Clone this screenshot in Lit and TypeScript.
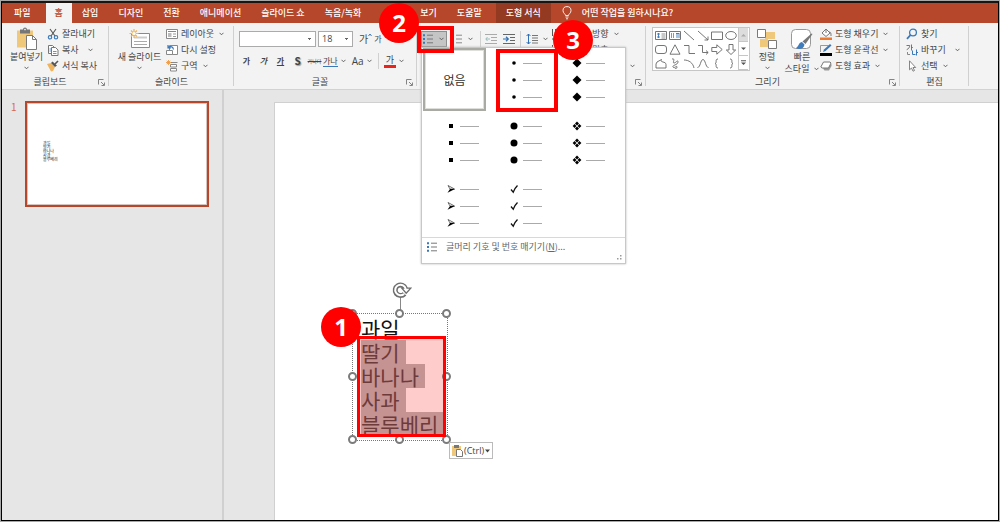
import { LitElement, html, css, svg, nothing } from "lit";
import type { TemplateResult } from "lit";
import { customElement } from "lit/decorators.js";
import { classMap } from "lit/directives/class-map.js";

const icon = (w: number, h: number, body: unknown) =>
  html`<svg class="icon" width=${w} height=${h} viewBox="0 0 ${w} ${h}" fill="none" aria-hidden="true">${body}</svg>`;

const chevron = html`<svg class="chev" width="5" height="4" viewBox="0 0 5 4" fill="none" aria-hidden="true"><path d="M.5 .8 2.5 2.8 4.5 .8" stroke="#555" stroke-width=".9" /></svg>`;

const pasteIcon = icon(22, 24, svg`
  <path d="M1 3.500h16v17H1z" fill="#efc87c"/>
  <path d="M4 2.500h3a2 2 0 0 1 4 0h3v4H4z" fill="#777"/>
  <circle cx="9" cy="2.600" r=".8" fill="#fff"/>
  <path d="M10.500 8.500h6l4 4v10h-10z" fill="#fff" stroke="#7a7a7a"/>
  <path d="M16.500 8.500v4h4" stroke="#7a7a7a"/>`);

const cutIcon = icon(12, 12, svg`
  <path d="M3 1l5 7M9 1L4 8" stroke="#555" stroke-width="1.100"/>
  <circle cx="3" cy="9.300" r="1.700" stroke="#3a78b8" stroke-width="1.100"/>
  <circle cx="9" cy="9.300" r="1.700" stroke="#3a78b8" stroke-width="1.100"/>`);

const copyIcon = icon(12, 12, svg`
  <path d="M1.500 1.500h4l2 2v6h-6z" fill="#fff" stroke="#777"/>
  <path d="M4.500 3.500h4l2.500 2.500v5.500H4.500z" fill="#fff" stroke="#777"/>
  <path d="M6 7.500h3.500M6 9.500h3.500M2.500 5h1.500M2.500 7h1.500" stroke="#3a78b8" stroke-width=".8"/>`);

const brushIcon = icon(12, 12, svg`
  <path d="M0 4l4-1 4 4-2 4-2 .5z" fill="#efb45c"/>
  <path d="M4 3l1.500-1.500 4.500 4L8 7z" fill="#555"/>
  <path d="M8 4l3-3" stroke="#555" stroke-width="1.600"/>`);

const newSlideIcon = icon(22, 20, svg`
  <path d="M2.500 4.500h18v14h-18z" fill="#fff" stroke="#8a8a8a"/>
  <path d="M5 8.500h13" stroke="#ccc" stroke-width="2"/>
  <path d="M5 12.500h13M5 15.500h13" stroke="#aaa"/>
  <path d="M5 0v9M.5 4.500h9M2 1.500l6 6M8 1.500l-6 6" stroke="#efb45c" stroke-width="1.200"/>
  <circle cx="5" cy="4.500" r="1.600" fill="#fff"/>`);

const layoutIcon = icon(12, 12, svg`
  <path d="M.5 1.500h11v9H.5z" fill="#fff" stroke="#888"/>
  <path d="M2 3.500h8" stroke="#888"/>
  <path d="M2 5h3.500v4H2z" fill="#bbb"/>
  <path d="M7 6h3M7 8.500h3" stroke="#999"/>`);

const resetIcon = icon(12, 12, svg`
  <path d="M3.500 1.500h8v9h-8z" fill="#fff" stroke="#888"/>
  <path d="M.5 6.500h6v4h-6z" fill="#fff" stroke="#888"/>
  <path d="M2 3.500c1.500-1.500 5-1.500 5.500 2M2 1v3h3" stroke="#3a78b8" stroke-width="1.200"/>`);

const sectionIcon = icon(12, 12, svg`
  <path d="M5 2.500h6.500" stroke="#888"/>
  <path d="M4.500 4.500h6v2.500h-6zM4.500 8.500h6V11h-6z" fill="#fff" stroke="#888"/>
  <path d="M2.500 0v5M0 2.500h5M.8 .8l3.400 3.400M4.200 .8L.8 4.200" stroke="#ee9b45" stroke-width=".9"/>`);

const listIcon = icon(12, 12, svg`
  <path d="M1 1.200h2v2H1zM1 5h2v2H1zM1 8.800h2v2H1z" fill="#3a78b8"/>
  <path d="M5 2.200h6M5 6h6M5 9.800h6" stroke="#777"/>`);

const numberIcon = icon(12, 12, svg`
  <path d="M2 1v2.500M2 4.700v2.500M2 8.500v2.500" stroke="#3a78b8"/>
  <path d="M5 2.200h6M5 6h6M5 9.800h6" stroke="#888"/>`);

const outdentIcon = icon(12, 12, svg`
  <path d="M0 1.500h12M6 4.500h6M6 7.500h6M0 10.500h12" stroke="#aaa"/>
  <path d="M5 6H1M2.500 4 .8 6l1.700 2" stroke="#9bb"/>`);

const indentIcon = icon(12, 12, svg`
  <path d="M0 1.500h12M7 4.500h5M7 7.500h5M0 10.500h12" stroke="#666"/>
  <path d="M0 6h5M3 3.800 5.300 6 3 8.200" stroke="#2f6fb5" stroke-width="1.200"/>`);

const spacingIcon = icon(12, 12, svg`
  <path d="M2.500 1v10M.6 3 2.500 1l1.900 2M.6 9l1.900 2 1.900-2" stroke="#2f6fb5"/>
  <path d="M6 2.500h6M6 5h6M6 7.500h6M6 10h6" stroke="#777"/>`);

const directionIcon = icon(12, 12, svg`
  <path d="M1.500 1v7M4.500 1v7M1 11h3" stroke="#555"/>
  <path d="M8 1v9M6.500 8.500 8 10.500l1.500-2" stroke="#2f6fb5"/>`);

const arrangeIcon = icon(22, 22, svg`
  <path d="M9 4h10v7H9zM4 11h8v8H4z" fill="#efc87c"/>
  <path d="M1.500 1.500h8v8h-8zM12.500 12.500h8v8h-8z" fill="#fff" stroke="#7a7a7a"/>`);

const styleIcon = icon(24, 24, svg`
  <rect x="1.500" y="2.500" width="19" height="19" rx="4" fill="#fff" stroke="#999"/>
  <path d="M22.500 7l-7 10-3-2.500L21.500 6.500z" fill="#777"/>
  <path d="M12 15c-3 0-3 4-6 6 3 2 8 1 8.500-3.500z" fill="#3f7dbf"/>`);

const fillIcon = icon(12, 12, svg`
  <path d="M2 5l4-4 4 4-4 3.500z" fill="#fff" stroke="#777"/>
  <path d="M6 1v4M9 4c2 0 2 1 2 4" stroke="#777"/>
  <path d="M0 9.500h12V12H0z" fill="#ee7a30"/>`);

const outlineIcon = icon(12, 12, svg`
  <path d="M.5 8V1.500h8" stroke="#999"/>
  <path d="M3 8l1-2.500L10 0l1.500 1.500-6 5.500z" fill="#3a78b8"/>
  <path d="M0 9h12v3H0z" fill="#000"/>`);

const effectIcon = icon(12, 12, svg`
  <path d="M3 8.500l1.500 2H9L11.500 6V4z" fill="#999"/>
  <path d="M3.500 2h6.500l1 1-2.500 5H2L.8 7z" fill="#fff" stroke="#777"/>`);

const findIcon = icon(12, 12, svg`
  <circle cx="7" cy="4.500" r="3.400" stroke="#3a78b8" stroke-width="1.300"/>
  <path d="M4.500 7 1 10.800" stroke="#3a78b8" stroke-width="1.800"/>`);

const replaceIcon = icon(12, 12, svg`
  <path d="M.5 1.500h3.200c0 1.800-1 3.300-3 4.200M5.500 .5v6M5.500 3.500h1.300" stroke="#666" stroke-width=".9"/>
  <path d="M6.500 6.500v4h3M10.500 5.500v6M10.500 8.500H12" stroke="#3a78b8"/>
  <path d="M1.500 8v2.500H4" stroke="#888"/>`);

const selectIcon = icon(12, 12, svg`
  <path d="M3.500 .8v9l2-1.800 1.500 3.200 1.500-.7L7 7.500h2.700z" fill="#fff" stroke="#777" stroke-width=".9"/>`);

const launcherIcon = icon(7, 7, svg`
  <path d="M.5 5.500v-5h5M3 3l3 3M6.500 3.500v3h-3" stroke="#777" stroke-width=".9"/>`);

const bulbIcon = icon(10, 14, svg`
  <path d="M3.500 9.500C3.500 8 1 7.200 1 4.600a4 4 0 0 1 8 0C9 7.200 6.500 8 6.500 9.500zM3.500 11h3M4 12.800h2" stroke="#fff" stroke-width=".9"/>`);

const shapeBodies = [
  svg`<path d="M.5 1.500h11v8H.5z"/><path d="M2 4h3M2 7h3M3.500 3v5" stroke="#3a78b8"/><path d="M6.500 4h4M6.500 6h4M6.500 8h4" stroke-width=".7"/>`,
  svg`<path d="M.5 1.500h11v8H.5z"/><path d="M7 3.500h3M8 3v5M10 3v5" stroke="#3a78b8"/><path d="M2.500 3v5M4.500 3v5" stroke-width=".7"/>`,
  svg`<path d="M1 1l10 9"/>`,
  svg`<path d="M1 1l10 9M11 6.500V10H7.500"/>`,
  svg`<path d="M.5 2h11v7.500H.5z"/>`,
  svg`<ellipse cx="6" cy="5.500" rx="5.300" ry="4"/>`,
  svg`<rect x=".5" y="1.500" width="11" height="8" rx="2.500"/>`,
  svg`<path d="M6 .8l5 9.400H1z"/>`,
  svg`<path d="M1 1.500h5v8h6"/>`,
  svg`<path d="M1 1.500h4.500v7H11M9 6.500l2.200 2L9 10.500"/>`,
  svg`<path d="M.8 3.500h5V.8L11.200 5.500l-5.400 4.700V7.500h-5z"/>`,
  svg`<path d="M4 .5h4V6h2.700L6 10.500 1.300 6H4z"/>`,
  svg`<path d="M2 4l4.500-2.500c-2 3.500 4.500 1.500 4.500 5v3.500H1V6z"/>`,
  svg`<path d="M3 1c4-1 0 4 2 4s4-4 4-1-6 3-5 5 4-2 4 0-2 2-2 1"/>`,
  svg`<path d="M1 2c5 0 9 3 10 8"/>`,
  svg`<path d="M.5 9.500c3 0 3-8 5.500-8s2.500 8 5.500 8"/>`,
  svg`<path d="M7 1C3.500 1 6.500 5 4 5.500 6.500 6 3.500 10 7 10"/>`,
  svg`<path d="M5 1c3.500 0 .5 4 3 4.500C5.500 6 8.500 10 5 10"/>`,
];

type Mark = (y: number) => unknown;
const marks: { name: string; mark: Mark }[] = [
  { name: "작은 원", mark: (y) => svg`<circle cx="28" cy=${y} r="1.800"/>` },
  { name: "마름모", mark: (y) => svg`<path transform="translate(28 ${y})" d="M0-4.500 4.500 0 0 4.500-4.500 0z"/>` },
  { name: "사각형", mark: (y) => svg`<rect x="26" y=${y - 2} width="4" height="4"/>` },
  { name: "큰 원", mark: (y) => svg`<circle cx="28" cy=${y} r="3.500"/>` },
  {
    name: "별표 마름모",
    mark: (y) => svg`<g transform="translate(28 ${y})"><path d="M0-4.400 2-2.400 0-.6-2-2.400zM0 .6 2 2.400 0 4.400-2 2.400zM-4.400 0-2.400-2-.6 0-2.400 2zM.6 0 2.400-2 4.400 0 2.400 2z"/></g>`,
  },
  {
    name: "화살표",
    mark: (y) => svg`<g transform="translate(28 ${y})"><path d="M-3-3.500 3.500 0-1 0z" fill="#fff" stroke="#333" stroke-width=".7"/><path d="M-3.500 3.800-1 0h5z"/></g>`,
  },
  {
    name: "확인 표시",
    mark: (y) => svg`<path transform="translate(28 ${y})" d="M-3 .5-.8 3.200C0 .5 2-2 3.500-3.500" fill="none" stroke="#111" stroke-width="1.300"/>`,
  },
];

const handles = ["nw", "n", "ne", "w", "e", "sw", "s", "se"];

@customElement("app-root")
export class AppRoot extends LitElement {
  static styles = css`
    :host {
      display: block;
      height: 100vh;
      box-sizing: border-box;
      padding: 1px;
      background: #a8a8a8;
      font-family: "Noto Sans CJK KR", "Noto Sans", sans-serif;
      font-size: 9px;
      line-height: 12px;
      color: #444;
    }
    * { box-sizing: border-box; }
    button, select, input {
      font: inherit;
      color: inherit;
      background: none;
      border: 0;
      padding: 0;
      margin: 0;
      border-radius: 0;
      white-space: nowrap;
    }
    svg { display: block; flex: none; }
    .frame {
      height: 100%;
      display: flex;
      flex-direction: column;
      border: 1px solid #000;
      border-top: 2px solid #1c1410;
      overflow: hidden;
      background: #e6e6e6;
    }
    .tabs {
      display: flex;
      height: 20px;
      flex: none;
      background: #b7472a;
      color: #fff;
      font-weight: 500;
    }
    .tab { padding: 0 10px; }
    .tab.file { padding: 0 15px 0 12px; }
    .tab.active { background: #f3f3f3; color: #b7472a; padding: 0 9px; }
    .tab.covered { width: 39px; }
    .tab.context { background: #943a22; margin-left: 4px; }
    .tell { display: flex; align-items: center; gap: 10px; padding: 0 11px; }

    .ribbon {
      display: flex;
      flex: none;
      height: 67px;
      background: #f3f3f3;
      border-bottom: 1px solid #d2d2d2;
      position: relative;
      z-index: 2;
    }
    .group {
      position: relative;
      flex: none;
      display: flex;
      flex-direction: column;
      padding-top: 2px;
    }
    .group::after {
      content: "";
      position: absolute;
      right: 0;
      top: 3px;
      bottom: 3px;
      width: 1px;
      background: #d0d0d0;
    }
    .clipboard { width: 107px; }
    .slides { width: 125px; }
    .font { width: 183px; }
    .paragraph { width: 229px; }
    .drawing { width: 254px; }
    .editing { width: 69px; }
    .body { display: flex; flex: 1; min-height: 0; padding-left: 4px; }
    .foot { display: flex; flex: none; align-items: center; height: 14px; }
    .caption { flex: 1; text-align: center; }
    .launch { width: 11px; }
    .big {
      display: flex;
      flex-direction: column;
      align-items: center;
      padding-top: 2px;
    }
    .art { height: 24px; display: flex; align-items: center; }
    .big .chev { margin-top: 3px; }
    .clipboard .big { width: 41px; }
    .slides .big { width: 53px; }
    .two { display: flex; align-items: center; gap: 5px; }
    .two .chev { margin: 0; }
    .col { display: flex; flex-direction: column; padding-top: 1px; }
    .cmd { display: flex; align-items: center; height: 16px; gap: 3px; }
    .cmd .chev { margin-left: 2px; }

    .font .body { flex-direction: column; }
    .row { display: flex; align-items: center; }
    .boxes { height: 28px; gap: 2px; padding-left: 1px; }
    .combo {
      height: 16px;
      background: #fff;
      border: 1px solid #ababab;
      appearance: none;
      padding: 0 3px;
      background-image: linear-gradient(#666, #666), linear-gradient(#666, #666);
      background-size: 3px 1px, 1px 1px;
      background-repeat: no-repeat;
      background-position: right 4px top 6px, right 5px top 7px;
    }
    .family { width: 77px; }
    .size { width: 35px; font-family: "Open Sans", sans-serif; }
    .grow { padding-left: 4px; font-size: 10px; display: flex; }
    .shrink { font-size: 8px; }
    .letters { height: 16px; }
    .letter { width: 17px; text-align: center; flex: none; font-size: 8px; }
    .b { font-weight: 700; }
    .i { font-style: italic; font-weight: 700; }
    .u { text-decoration: underline; font-weight: 700; }
    .sh { font-weight: 700; text-shadow: 1px 1px 1px #999; font-size: 10px; }
    .st { text-decoration: line-through; font-size: 5px; }
    .gap { border-bottom: 1px solid #3a78b8; line-height: 11px; font-size: 8px; }
    .aa { font-family: "Open Sans", sans-serif; font-size: 10px; }
    .drop { display: flex; align-items: center; gap: 3px; }
    .letters .drop { padding-right: 6px; }
    .bar { width: 1px; height: 16px; background: #d0d0d0; margin: 0 1px; }
    .letters .bar { margin: 0 5px 0 0; }
    .color { border-bottom: 3px solid #e8241c; line-height: 11px; padding: 0 2px; }

    .tools {
      display: grid;
      grid-template-columns: auto 1fr;
      grid-template-rows: 33px 16px;
      width: 100%;
    }
    .strip { display: flex; align-items: center; height: 28px; gap: 3px; }
    .list {
      display: flex;
      align-items: center;
      gap: 5px;
      width: 26px;
      height: 16px;
      padding-left: 1px;
    }
    .list.on { background: #c5c5c5; border: 1px solid #8e8e8e; padding: 0; }
    .outdent { padding-right: 3px; }
    .indent { padding-right: 1px; }
    .covered-label { padding-left: 26px; }
    .smart { justify-content: flex-end; grid-column: 1 / 3; padding-right: 11px; }

    .drawing .body { padding-left: 6px; }
    .gallery {
      display: grid;
      grid-template-columns: repeat(6, 14px) 10px;
      grid-template-rows: repeat(3, 14px);
      margin-top: 2px;
      height: 44px;
      width: 98px;
      padding-left: 1px;
      background: #fff;
      border: 1px solid #c6c6c6;
    }
    .shape { display: grid; place-items: center; }
    .shape svg { stroke: #666; stroke-width: .9; }
    .scroll { display: grid; grid-template-rows: repeat(3, 14px); grid-column: 7; grid-row: 1 / 4; }
    .scroll button { display: grid; place-items: center; border-left: 1px solid #c6c6c6; border-bottom: 1px solid #c6c6c6; }
    .scroll button:first-child { background: #ddd; }
    .drawing .big { width: 34px; }
    .drawing .big.wide { width: 36px; }
    .editing .body { padding-left: 6px; }
    .wide-gap .chev { margin-left: 6px; }

    .menu {
      position: absolute;
      left: 4px;
      top: 24px;
      width: 205px;
      background: #fff;
      border: 1px solid #c8c8c8;
      box-shadow: 0 0 2px #bbb;
      z-index: 1;
    }
    .bullets { display: grid; grid-template-columns: repeat(3, 63px); grid-auto-rows: 63px; padding: 0 0 0 1px; }
    .bullet.none {
      border: 2px solid #a9aaa4;
      outline: 1px solid #dededa;
      outline-offset: -3px;
      font-size: 12px;
      color: #333;
    }
    .define {
      display: flex;
      align-items: center;
      gap: 8px;
      width: 100%;
      height: 18px;
      padding-left: 4px;
      border-top: 1px solid #d8d8d8;
      color: #666;
    }
    .grip { display: flex; justify-content: flex-end; height: 8px; padding-right: 3px; }
    .mark { position: absolute; border: 4px solid #f00; pointer-events: none; z-index: 2; }
    .mark.trigger { left: 0; top: 3px; width: 37px; height: 27px; }
    .mark.choice { left: 79px; top: 26px; width: 62px; height: 63px; }
    .badge {
      position: absolute;
      z-index: 3;
      width: 40px;
      height: 40px;
      border-radius: 50%;
      background: #f00;
      color: #fff;
      font: 700 24px/39px "Open Sans", sans-serif;
      text-align: center;
      pointer-events: none;
    }
    .badge.two-step { left: -38px; top: -20px; }
    .badge.three-step { left: 136px; top: -3px; }

    .work { display: flex; flex: 1; min-height: 0; }
    .pane {
      flex: none;
      width: 222px;
      border-right: 2px solid #d0d0d0;
      padding: 11px 13px 0 9px;
      display: flex;
      align-items: flex-start;
      gap: 8px;
    }
    .num { color: #d9694c; font-size: 10px; width: 6px; }
    .thumb {
      flex: 1;
      height: 106px;
      border: 2px solid #b7472a;
      background: #fff;
      box-shadow: inset 0 0 0 1px #d8c4be;
      padding: 38px 0 0 16px;
      font-size: 4px;
      line-height: 4px;
      color: #222;
      display: flex;
      flex-direction: column;
      align-items: flex-start;
      justify-content: flex-start;
    }
    .editor { flex: 1; padding: 12px 0 0 50px; display: flex; }
    .slide { position: relative; flex: 1; background: #fff; border: 1px solid #d0d0d0; border-width: 1px 0 0 1px; }
    .shape-box {
      position: absolute;
      left: 77px;
      top: 210px;
      width: 96px;
      border: 1px dotted #777;
      padding: 2px 8px 4px;
      font-size: 21px;
      line-height: 24px;
      color: #111;
    }
    .shape-box p { margin: 0; white-space: nowrap; }
    .sel { display: inline-block; height: 24px; background: #b8b8b8; color: #4a4a4a; padding-right: 6px; vertical-align: top; }
    .handle { position: absolute; width: 9px; height: 9px; border: 2px solid #7b7b7b; border-radius: 50%; background: #fff; margin: -5px; }
    .n { top: 0; left: 50%; } .s { top: 100%; left: 50%; }
    .w { left: 0; top: 50%; } .e { left: 100%; top: 50%; }
    .nw { left: 0; top: 0; } .ne { left: 100%; top: 0; }
    .sw { left: 0; top: 100%; } .se { left: 100%; top: 100%; }
    .rotate { position: absolute; left: 37px; top: -34px; }
    .mark.area { left: 4px; top: 22px; width: 89px; height: 101px; border-width: 3px; background: rgba(255, 0, 0, .2); }
    .badge.one-step { left: -32px; top: -7px; }
    .ctrl {
      position: absolute;
      left: 174px;
      top: 339px;
      display: flex;
      align-items: center;
      gap: 1px;
      height: 17px;
      padding: 0 2px;
      border: 1px solid #bbb;
      background: #fff;
      font-family: "Open Sans", sans-serif;
    }
  `;

  private group(name: string, caption: string, body: TemplateResult, launcher = true, overlay: unknown = nothing) {
    return html`<section class="group ${name}" aria-label=${name === "paragraph" ? "단락" : caption}>
      <div class="body">${body}</div>
      <div class="foot">
        <span class="caption">${caption}</span>
        ${launcher ? html`<button class="launch" aria-label="옵션">${launcherIcon}</button>` : nothing}
      </div>
      ${overlay}
    </section>`;
  }

  private cmd(glyph: unknown, label: unknown, menu = false, extra = "") {
    return html`<button class="cmd ${extra}">${glyph}<span>${label}</span>${menu ? chevron : nothing}</button>`;
  }

  private bullet(item: { name: string; mark: Mark }) {
    const rows = [15, 32, 49];
    return html`<button class="bullet" aria-label=${item.name}>
      <svg width="63" height="63" viewBox="0 0 63 63" fill="#000" aria-hidden="true">
        ${rows.map((y) => svg`${item.mark(y)}<path d="M37 ${y + 0.5}h19" stroke="#aaa"/>`)}
      </svg>
    </button>`;
  }

  private renderMenu() {
    return html`<div class="menu">
        <div class="bullets">
          <button class="bullet none">없음</button>
          ${marks.map((m) => this.bullet(m))}
        </div>
        <button class="define">${listIcon}<span>글머리 기호 및 번호 매기기(<u>N</u>)...</span></button>
        <div class="grip">${icon(6, 6, svg`<path d="M4 0h1.500v1.500H4zM4 3h1.500v1.500H4zM1 3h1.500v1.500H1z" fill="#999"/>`)}</div>
      </div>
      <div class="mark trigger"></div>
      <div class="mark choice"></div>
      <div class="badge two-step">2</div>
      <div class="badge three-step">3</div>`;
  }

  render() {
    const tabs = ["파일", "홈", "삽입", "디자인", "전환", "애니메이션", "슬라이드 쇼", "녹음/녹화", "", "보기", "도움말", "도형 서식"];
    const lines = ["과일", "딸기", "바나나", "사과", "블루베리"];
    return html`<div class="frame">
      <nav class="tabs">
        ${tabs.map((t) => html`<button
          class=${classMap({ tab: true, file: t === "파일", active: t === "홈", covered: t === "", context: t === "도형 서식" })}
          aria-label=${t || "검토"}>${t}</button>`)}
        <button class="tell">${bulbIcon}<span>어떤 작업을 원하시나요?</span></button>
      </nav>
      <div class="ribbon">
        ${this.group("clipboard", "클립보드", html`
          <button class="big"><span class="art">${pasteIcon}</span><span>붙여넣기</span>${chevron}</button>
          <div class="col">
            ${this.cmd(cutIcon, "잘라내기")}
            ${this.cmd(copyIcon, "복사", true, "wide-gap")}
            ${this.cmd(brushIcon, "서식 복사")}
          </div>`)}
        ${this.group("slides", "슬라이드", html`
          <button class="big"><span class="art">${newSlideIcon}</span><span>새 슬라이드</span>${chevron}</button>
          <div class="col">
            ${this.cmd(layoutIcon, "레이아웃", true)}
            ${this.cmd(resetIcon, "다시 설정")}
            ${this.cmd(sectionIcon, "구역", true)}
          </div>`, false)}
        ${this.group("font", "글꼴", html`
          <div class="row boxes">
            <select class="combo family" aria-label="글꼴"><option></option></select>
            <select class="combo size" aria-label="글꼴 크기"><option>18</option></select>
            <button class="grow" aria-label="글꼴 크게">가${icon(4, 4, svg`<path d="M.5 3 2 1l1.500 2" stroke="#3a78b8"/>`)}</button>
            <button class="shrink" aria-label="글꼴 작게">가</button>
          </div>
          <div class="row letters">
            <button class="letter b">가</button>
            <button class="letter i">가</button>
            <button class="letter u">가</button>
            <button class="letter sh">S</button>
            <button class="letter st">가나다</button>
            <button class="drop"><span class="gap">가나</span>${chevron}</button>
            <button class="drop"><span class="aa">Aa</span>${chevron}</button>
            <span class="bar"></span>
            <button class="drop"><span class="color">가</span>${chevron}</button>
          </div>`)}
        ${this.group("paragraph", "", html`
          <div class="tools">
            <div class="strip">
              <button class="list on" aria-label="글머리 기호">${listIcon}${chevron}</button>
              <button class="list" aria-label="번호 매기기">${numberIcon}${chevron}</button>
              <span class="bar"></span>
              <button class="outdent" aria-label="목록 수준 줄임">${outdentIcon}</button>
              <button class="indent" aria-label="목록 수준 늘림">${indentIcon}</button>
              <span class="bar"></span>
              <button class="list" aria-label="줄 간격">${spacingIcon}${chevron}</button>
            </div>
            <div class="col">
              ${this.cmd(directionIcon, html`<span class="covered-label">방향</span>`, true)}
              ${this.cmd(directionIcon, html`<span class="covered-label">맞춤</span>`)}
            </div>
            <button class="cmd smart" aria-label="SmartArt로 변환">${chevron}</button>
          </div>`, true, this.renderMenu())}
        ${this.group("drawing", "그리기", html`
          <div class="gallery">
            <div class="scroll">
              <button aria-label="위로">${icon(5, 4, svg`<path d="M0 3.500 2.500 1 5 3.500z" fill="#aaa"/>`)}</button>
              <button aria-label="아래로">${icon(5, 4, svg`<path d="M0 .5h5L2.500 3z" fill="#555"/>`)}</button>
              <button aria-label="자세히">${icon(5, 6, svg`<path d="M0 2.500h5L2.500 5zM0 .2h5v1H0z" fill="#555"/>`)}</button>
            </div>
            ${shapeBodies.map((s, i) => html`<button class="shape" aria-label="도형 ${i + 1}">${icon(12, 11, s)}</button>`)}
          </div>
          <button class="big"><span class="art">${arrangeIcon}</span><span>정렬</span>${chevron}</button>
          <button class="big wide"><span class="art">${styleIcon}</span><span>빠른</span><span class="two">스타일${chevron}</span></button>
          <div class="col">
            ${this.cmd(fillIcon, "도형 채우기", true)}
            ${this.cmd(outlineIcon, "도형 윤곽선", true)}
            ${this.cmd(effectIcon, "도형 효과", true)}
          </div>`)}
        ${this.group("editing", "편집", html`
          <div class="col">
            ${this.cmd(findIcon, "찾기")}
            ${this.cmd(replaceIcon, "바꾸기", true, "wide-gap")}
            ${this.cmd(selectIcon, "선택", true)}
          </div>`, false)}
      </div>
      <main class="work">
        <aside class="pane">
          <span class="num">1</span>
          <button class="thumb" aria-label="슬라이드 1">${lines.map((l) => html`<span>${l}</span>`)}</button>
        </aside>
        <div class="editor">
          <div class="slide">
            <div class="shape-box">
              ${lines.map((l, i) => html`<p>${i === 0 ? l : html`<span class="sel">${l}</span>`}</p>`)}
              <svg class="rotate" width="22" height="34" viewBox="0 0 22 34" fill="none" aria-hidden="true">
                <path d="M10.500 18v13" stroke="#888"/>
                <path d="M15.500 8.500A5.300 5.300 0 1 0 14.500 13.800" stroke="#6e6e6e" stroke-width="5"/>
                <path d="M11.800 8.200h9l-4.600 5z" fill="#fff" stroke="#6e6e6e" stroke-width="1.300"/>
                <path d="M15.700 9A5.300 5.300 0 1 0 14.100 13.900" stroke="#fff" stroke-width="2"/>
              </svg>
              ${handles.map((h) => html`<span class="handle ${h}"></span>`)}
              <div class="mark area"></div>
              <div class="badge one-step">1</div>
            </div>
            <button class="ctrl">
              ${icon(11, 13, svg`<path d="M0 2h9v10H0z" fill="#efc87c"/><path d="M2 1h5v3H2z" fill="#777"/><path d="M4.500 5.500h4l2 2v5h-6z" fill="#fff" stroke="#777"/>`)}
              <span>(Ctrl)</span>
              ${icon(5, 4, svg`<path d="M0 .5h5L2.500 3.500z" fill="#444"/>`)}
            </button>
          </div>
        </div>
      </main>
    </div>`;
  }
}
